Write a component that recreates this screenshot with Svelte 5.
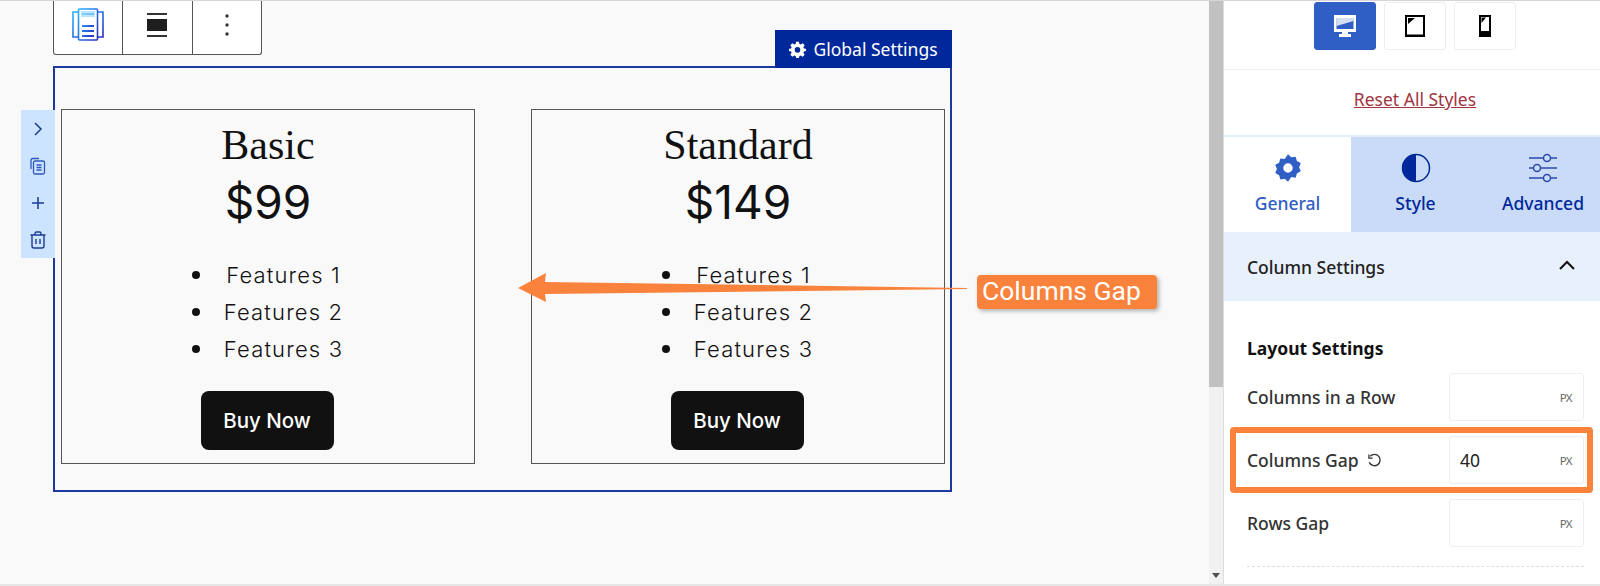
<script>
  const cards = [
    { name: 'Basic', price: '$99' },
    { name: 'Standard', price: '$149' }
  ];
  const features = ['Features 1', 'Features 2', 'Features 3'];
  const fields = [
    { label: 'Columns in a Row', value: '' },
    { label: 'Columns Gap', value: '40', active: true },
    { label: 'Rows Gap', value: '' }
  ];
</script>

<div class="page">
  <main class="canvas">
    <div class="toolbar">
      <div class="cell">
        <svg width="34" height="34" viewBox="0 0 34 34" fill="none" stroke="url(#g)" stroke-width="1.6">
          <defs>
            <linearGradient id="g" x1="0" y1="0" x2="1" y2="1"><stop offset="0" stop-color="#25b4ff"/><stop offset="1" stop-color="#2a2cc0"/></linearGradient>
          </defs>
          <path d="M8 4H2V29H8M26 4H32V29H26"/>
          <rect x="7.500" y="1" width="19" height="31" rx="1"/>
          <path d="M11 6H23M11 18H23M11 23H23M11 28H23" stroke-width="1.800"/>
          <path d="M10 3H24V9H10Z" fill="#9fdcff" stroke="none" opacity=".7"/>
        </svg>
      </div>
      <div class="cell">
        <svg width="24" height="26" viewBox="0 0 24 26"><path d="M2 2H22M2 24H22" stroke="#333" stroke-width="2"/><rect x="2" y="7" width="20" height="12" fill="#1e1e1e"/></svg>
      </div>
      <div class="cell">
        <svg width="6" height="24" viewBox="0 0 6 24" fill="#333"><circle cx="3" cy="3" r="1.700"/><circle cx="3" cy="12" r="1.700"/><circle cx="3" cy="21" r="1.700"/></svg>
      </div>
    </div>

    <section class="block">
      <div class="tag">
        <svg width="17" height="17" viewBox="0 0 24 24" fill="#fff"><path fill-rule="evenodd" d="M10 1h4l.7 3.200 1.800.8 2.800-1.800 2.800 2.800L20.300 8.800l.8 1.800L24 11v3l-2.900.7-.8 1.800 1.800 2.800-2.800 2.800-2.800-1.800-1.800.8L14 24h-4l-.7-2.900-1.800-.8-2.800 1.800-2.800-2.800 1.800-2.800-.8-1.800L0 14v-3l2.900-.4.800-1.800L1.900 6l2.800-2.800L7.500 5l1.800-.8zM12 8.500a4 4 0 1 0 0 8 4 4 0 0 0 0-8z"/></svg>
        <span>Global Settings</span>
      </div>
      <div class="handle">
        <svg width="18" height="18" viewBox="0 0 18 18" fill="none" stroke="#1c3a94" stroke-width="1.500"><path d="M6 3l6 6-6 6"/></svg>
        <svg width="18" height="18" viewBox="0 0 18 18" fill="none" stroke="#2f58bd" stroke-width="1.300"><path d="M2 12V3.500Q2 1.500 4 1.500H10"/><rect x="4.500" y="4" width="11" height="13" rx="1.500"/><path d="M7.500 8H12.500M7.500 10.500H12.500M7.500 13H12.500"/></svg>
        <svg width="18" height="18" viewBox="0 0 18 18" fill="none" stroke="#1c3a94" stroke-width="1.500"><path d="M9 3V15M3 9H15"/></svg>
        <svg width="18" height="18" viewBox="0 0 18 18" fill="none" stroke="#1c3a94" stroke-width="1.400"><path d="M1.500 4H16.500M6 4V2.500Q6 1 7.500 1H10.500Q12 1 12 2.500V4M3 4V15Q3 17 5 17H13Q15 17 15 15V4M7 8V13M11 8V13"/></svg>
      </div>
      {#each cards as card}
        <article class="card">
          <h2>{card.name}</h2>
          <div class="price">{card.price}</div>
          <ul>
            {#each features as f}<li>{f}</li>{/each}
          </ul>
          <button class="buy">Buy Now</button>
        </article>
      {/each}
    </section>

    <svg class="arrow" width="450" height="36" viewBox="0 0 450 36"><path d="M0 18L28 3 27 12 449 18V19L27 24 28 32Z" fill="#f9833c"/></svg>
    <div class="callout">Columns Gap</div>
  </main>

  <div class="scrollbar">
    <div class="thumb"></div>
    <svg class="down" width="8" height="5" viewBox="0 0 8 5"><path d="M0 0H8L4 5Z" fill="#505050"/></svg>
  </div>

  <aside class="panel">
    <div class="devices">
      <button class="device on" aria-label="Desktop">
        <svg width="24" height="24" viewBox="0 0 24 24"><path fill="#fff" fill-rule="evenodd" d="M1 1H23V18H15V20H18V23H6V20H9V18H1ZM3.500 4V15H20.500V4Z"/><path d="M3.500 4H20.500V7L3.500 12Z" fill="#fff" opacity=".8"/></svg>
      </button>
      <button class="device" aria-label="Tablet">
        <svg width="22" height="24" viewBox="0 0 22 24"><path fill-rule="evenodd" d="M1 1H21V23H1ZM3 3V20.500H19V3Z"/><path d="M4 4H11L4 10Z"/></svg>
      </button>
      <button class="device" aria-label="Mobile">
        <svg width="16" height="24" viewBox="0 0 16 24"><path fill-rule="evenodd" d="M2 1H14V23H2ZM4 3V17H12V3Z"/><path d="M4.500 3.500H9L4.500 9Z"/></svg>
      </button>
    </div>
    <div class="reset"><a href="#top">Reset All Styles</a></div>
    <div class="tabs">
      <div class="tab active">
        <svg width="30" height="30" viewBox="0 0 24 24" fill="#2f5ec4"><path fill-rule="evenodd" d="M12 1l2.600 2.400 3.500-.5 1 3.400 3.100 1.700-1.300 3.300 1.300 3.300-3.100 1.700-1 3.400-3.500-.5L12 23l-2.600-2.400-3.500.5-1-3.400-3.100-1.700 1.300-3.300-1.300-3.300 3.100-1.700 1-3.400 3.500.5zM12 8.200a3.800 3.800 0 1 0 0 7.600 3.800 3.800 0 0 0 0-7.600z"/></svg>
        <span>General</span>
      </div>
      <div class="tab">
        <svg width="30" height="30" viewBox="0 0 30 30"><circle cx="15" cy="15" r="13.500" fill="none" stroke="#00289b" stroke-width="1.500"/><path d="M15 1.500A13.500 13.500 0 0 0 15 28.500Z" fill="#00289b"/></svg>
        <span>Style</span>
      </div>
      <div class="tab shifted">
        <svg width="30" height="30" viewBox="0 0 30 30" fill="#c9dbf7" stroke="#2a4bab" stroke-width="1.500"><path d="M1 5H29M1 15H29M1 25H29"/><circle cx="19" cy="5" r="3.500"/><circle cx="9" cy="15" r="3.500"/><circle cx="19" cy="25" r="3.500"/></svg>
        <span>Advanced</span>
      </div>
    </div>
    <div class="accordion">
      <span>Column Settings</span>
      <svg width="16" height="10" viewBox="0 0 16 10" fill="none" stroke="#111" stroke-width="2"><path d="M1 9L8 2L15 9"/></svg>
    </div>
    <div class="settings">
      <h3>Layout Settings</h3>
      {#each fields as field}
        <div class="row">
          <label>
            {field.label}
            {#if field.active}
              <svg width="15" height="15" viewBox="0 0 16 16" fill="none" stroke="#333" stroke-width="1.500"><path d="M3.500 3.500A6 6 0 1 1 2.500 10"/><path d="M2 1.500V5.500H6" stroke-width="1.300"/></svg>
            {/if}
          </label>
          <div class="input"><span>{field.value}</span><small>PX</small></div>
          {#if field.active}<div class="highlight"></div>{/if}
        </div>
      {/each}
      <div class="dots"></div>
    </div>
  </aside>
</div>

<style>
  :global(body) { margin: 0; background: #fff; }
  .page {
    display: flex;
    width: 1600px;
    height: 586px;
    overflow: hidden;
    border-top: 1px solid #d6d6d6;
    border-bottom: 2px solid #e6e6e6;
    box-sizing: border-box;
  }
  .canvas {
    position: relative;
    width: 1209px;
    flex: none;
    background: #f9f9f9;
    padding-left: 53px;
    box-sizing: border-box;
  }
  .toolbar {
    display: flex;
    width: 209px;
    height: 55px;
    margin-top: -1px;
    background: #fff;
    border: 1px solid #555;
    border-top: 0;
    border-radius: 0 0 3px 3px;
    box-sizing: border-box;
  }
  .cell {
    flex: 1;
    display: flex;
    align-items: center;
    justify-content: center;
    padding-bottom: 4px;
    border-left: 1px solid #555;
  }
  .cell:first-child { border-left: 0; }
  .block {
    position: relative;
    display: flex;
    gap: 56px;
    width: 899px;
    height: 426px;
    margin-top: 11px;
    padding: 41px 6px 0 6px;
    box-sizing: border-box;
    border: 2px solid #1c3a9c;
  }
  .tag {
    position: absolute;
    top: -38px;
    right: -2px;
    width: 177px;
    height: 38px;
    background: #00289b;
    color: #fff;
    display: flex;
    align-items: center;
    justify-content: center;
    gap: 7px;
    font: 17.500px "Noto Sans", sans-serif;
    box-sizing: border-box;
    white-space: nowrap;
  }
  .handle {
    position: absolute;
    left: -34px;
    top: 42px;
    width: 34px;
    height: 148px;
    background: #cce4ff;
    display: flex;
    flex-direction: column;
    align-items: center;
    justify-content: space-between;
    padding: 10px 0 9px;
    box-sizing: border-box;
  }
  .card {
    width: 414px;
    height: 355px;
    flex: none;
    box-sizing: border-box;
    border: 1px solid #555;
    text-align: center;
    color: #111;
    display: flex;
    flex-direction: column;
    align-items: center;
  }
  h2 {
    margin: 9px 0 0;
    font: 400 42px/52px "Liberation Serif", serif;
    color: #111;
  }
  .price {
    font: 400 46px/54px Inter, sans-serif;
    color: #111;
    margin-top: 4px;
  }
  ul {
    margin: 28px 0 0;
    padding: 0 0 0 31px;
    list-style: none;
    font: 350 22px/37px Inter, sans-serif;
    letter-spacing: 1.150px;
  }
  li { position: relative; }
  li::before {
    content: "";
    position: absolute;
    left: -32px;
    top: 14px;
    width: 8px;
    height: 8px;
    border-radius: 50%;
    background: #111;
  }
  .buy {
    margin: 23px 2px 0 0;
    width: 133px;
    height: 59px;
    border: 0;
    border-radius: 8px;
    background: #111;
    color: #fff;
    font: 500 20.500px Inter, sans-serif;
  }
  .arrow {
    position: absolute;
    left: 518px;
    top: 269px;
  }
  .callout {
    position: absolute;
    left: 977px;
    top: 274px;
    width: 180px;
    height: 34px;
    box-sizing: border-box;
    padding-left: 5px;
    background: #f9833c;
    border-radius: 4px;
    box-shadow: 2px 2px 4px rgba(0, 0, 0, .3);
    color: #fff;
    font: 400 26.500px/32px Roboto, sans-serif;
    white-space: nowrap;
  }
  .scrollbar {
    position: relative;
    width: 14px;
    flex: none;
    background: #f1f1f1;
  }
  .thumb {
    position: absolute;
    left: 0;
    right: 0;
    top: 0;
    height: 386px;
    background: #c1c1c1;
  }
  .down {
    position: absolute;
    left: 3px;
    bottom: 6px;
  }
  .panel {
    flex: 1;
    min-width: 0;
    background: #fff;
    border-left: 1px solid #ddd;
    font-family: "Noto Sans", sans-serif;
    color: #222;
  }
  .devices {
    display: flex;
    justify-content: center;
    gap: 8px;
    height: 69px;
    padding: 1px 0 0 6px;
    box-sizing: border-box;
    border-bottom: 1px solid #f0f0f0;
  }
  .device {
    width: 62px;
    height: 48px;
    padding: 0;
    display: flex;
    align-items: center;
    justify-content: center;
    background: #fff;
    border: 1px solid #eee;
    border-radius: 3px;
  }
  .device.on { background: #2f5ec4; border-color: #2f5ec4; }
  .reset {
    height: 65px;
    display: flex;
    align-items: center;
    justify-content: center;
    padding: 0 0 7px 6px;
    box-sizing: border-box;
    font-size: 17.500px;
  }
  .reset a { color: #a0353f; }
  .tabs {
    display: grid;
    grid-template-columns: 127px 129px 1fr;
    height: 97px;
    background: #c9dbf7;
    border-top: 2px solid #e4edfb;
    box-sizing: border-box;
  }
  .tab {
    display: flex;
    flex-direction: column;
    align-items: center;
    gap: 8px;
    padding-top: 16px;
    font-size: 17.500px;
    font-weight: 500;
    color: #00289b;
    white-space: nowrap;
  }
  .tab.shifted { padding-left: 6px; }
  .tab span { line-height: 24px; }
  .tab.active { background: #fff; color: #2f5ec4; }
  .accordion {
    height: 69px;
    background: #e8f0fb;
    display: flex;
    align-items: center;
    justify-content: space-between;
    padding: 0 25px 0 23px;
    font-size: 17.500px;
    font-weight: 500;
  }
  .accordion svg { margin-bottom: 4px; }
  .settings { padding: 35px 16px 0 23px; }
  h3 {
    margin: 0 0 13px;
    font-size: 17.500px;
    line-height: 24px;
    font-weight: 700;
    color: #111;
  }
  .row {
    position: relative;
    display: flex;
    justify-content: space-between;
    align-items: center;
    height: 48px;
    margin-bottom: 15px;
  }
  label {
    display: flex;
    align-items: center;
    gap: 8px;
    font-size: 17.500px;
    font-weight: 500;
    color: #333;
  }
  .input {
    width: 135px;
    height: 48px;
    box-sizing: border-box;
    border: 1px solid #eee;
    border-radius: 3px;
    display: flex;
    justify-content: space-between;
    align-items: center;
    padding: 0 11px 0 10px;
    font-size: 17.500px;
  }
  .input small {
    font: 11.500px "Noto Sans", sans-serif;
    letter-spacing: -.6px;
    color: #666;
  }
  .highlight {
    position: absolute;
    left: -17px;
    right: -9px;
    top: -9px;
    height: 66px;
    box-sizing: border-box;
    border: 6px solid #f9833c;
    border-radius: 4px;
    pointer-events: none;
  }
  .dots {
    margin-top: 19px;
    border-top: 1px dashed #ddd;
  }
</style>
